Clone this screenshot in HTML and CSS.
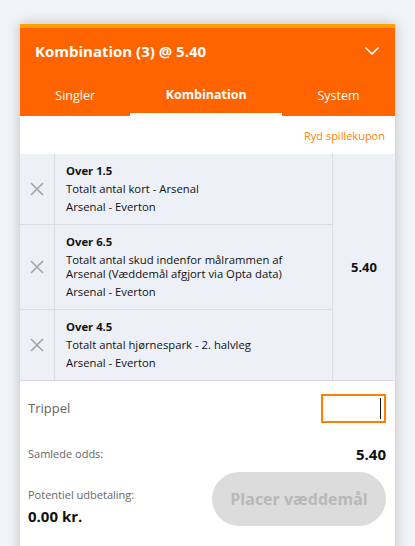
FILE: index.html
```html
<!DOCTYPE html>
<html lang="da">
<head>
<meta charset="utf-8">
<title>Spillekupon</title>
<link rel="stylesheet" href="styles.css">
</head>
<body>
<div class="slip">
  <div class="slip-header">
    <span class="slip-title">Kombination (3) @ 5.40</span>
    <svg class="chevron" width="14" height="8" viewBox="0 0 14 8"><path d="M1 1l6 6 6-6" fill="none" stroke="#fff" stroke-width="1.6" stroke-linecap="round" stroke-linejoin="round"/></svg>
  </div>
  <div class="tabs">
    <div class="tab">Singler</div>
    <div class="tab active">Kombination</div>
    <div class="tab">System</div>
  </div>
  <div class="clear-row"><span class="clear-link">Ryd spillekupon</span></div>
  <div class="legs">
    <div class="leg-list">
      <div class="leg">
        <div class="leg-remove"><svg width="14" height="14" viewBox="0 0 14 14"><path d="M1 1l12 12M13 1L1 13" stroke="#a3a3a3" stroke-width="1.6"/></svg></div>
        <div class="leg-info">
          <div class="leg-sel">Over 1.5</div>
          <div class="leg-market">Totalt antal kort - Arsenal</div>
          <div class="leg-event">Arsenal - Everton</div>
        </div>
      </div>
      <div class="leg">
        <div class="leg-remove"><svg width="14" height="14" viewBox="0 0 14 14"><path d="M1 1l12 12M13 1L1 13" stroke="#a3a3a3" stroke-width="1.6"/></svg></div>
        <div class="leg-info">
          <div class="leg-sel">Over 6.5</div>
          <div class="leg-market">Totalt antal skud indenfor målrammen af Arsenal (Væddemål afgjort via Opta data)</div>
          <div class="leg-event">Arsenal - Everton</div>
        </div>
      </div>
      <div class="leg">
        <div class="leg-remove"><svg width="14" height="14" viewBox="0 0 14 14"><path d="M1 1l12 12M13 1L1 13" stroke="#a3a3a3" stroke-width="1.6"/></svg></div>
        <div class="leg-info">
          <div class="leg-sel">Over 4.5</div>
          <div class="leg-market">Totalt antal hjørnespark - 2. halvleg</div>
          <div class="leg-event">Arsenal - Everton</div>
        </div>
      </div>
    </div>
    <div class="legs-odds">5.40</div>
  </div>
  <div class="stake-row">
    <span class="stake-label">Trippel</span>
    <div class="stake-input"><span class="caret"></span></div>
  </div>
  <div class="total-row">
    <span class="muted">Samlede odds:</span>
    <span class="total-odds">5.40</span>
  </div>
  <div class="payout-row">
    <div class="payout">
      <div class="muted">Potentiel udbetaling:</div>
      <div class="payout-value">0.00 kr.</div>
    </div>
    <div class="place-btn">Placer væddemål</div>
  </div>
</div>
</body>
</html>
```
FILE: styles.css
```css
html, body {
  margin: 0;
  padding: 0;
}
body {
  background: #f2f3f7;
  font-family: "Open Sans", "Noto Sans", sans-serif;
  color: #111;
  padding: 24px 20px 0 20px;
  height: 546px;
  box-sizing: border-box;
  overflow: hidden;
}
.slip {
  background: #fff;
  border-top: 4px solid #ffa000;
  box-shadow: 0 0 12px rgba(0, 0, 0, 0.22);
  min-height: 560px;
}
.slip-header {
  background: #ff6400;
  height: 44px;
  display: flex;
  align-items: center;
  justify-content: space-between;
  padding: 1px 15px 0 15px;
  box-sizing: border-box;
}
.slip-title {
  color: #fff;
  font-weight: 700;
  font-size: 15px;
}
.chevron {
  margin-right: 1px;
}
.tabs {
  background: #ff6400;
  display: flex;
  height: 44px;
}
.tab {
  flex: 1 1 auto;
  display: flex;
  align-items: center;
  justify-content: center;
  color: #fff;
  font-size: 12.5px;
  box-sizing: border-box;
  padding-top: 2px;
}
.tab.active {
  font-weight: 700;
  border-bottom: 3px solid #fff;
  padding-top: 3px;
}
.clear-row {
  height: 38px;
  display: flex;
  align-items: center;
  justify-content: flex-end;
  padding-right: 10px;
}
.clear-link {
  color: #ff7f00;
  font-size: 11px;
}
.legs {
  display: flex;
  background: #edf0f7;
  border-bottom: 1px solid #d9dce4;
}
.leg-list {
  flex: 1;
}
.leg {
  display: flex;
  border-bottom: 1px solid #d9dce4;
}
.leg:last-child {
  border-bottom: none;
}
.leg-remove {
  width: 35px;
  flex: none;
  border-right: 1px solid #d9dce4;
  display: flex;
  align-items: center;
  justify-content: center;
  box-sizing: border-box;
}
.leg-info {
  flex: 1;
  padding: 10px 10px 10px 11px;
  display: flex;
  flex-direction: column;
  gap: 4px;
  font-size: 11.3px;
  line-height: 14px;
}
.leg-sel {
  font-weight: 700;
}
.legs-odds {
  width: 63px;
  flex: none;
  border-left: 1px solid #d9dce4;
  display: flex;
  align-items: center;
  justify-content: center;
  font-weight: 700;
  font-size: 13px;
  box-sizing: border-box;
}
.stake-row {
  height: 54px;
  display: flex;
  align-items: center;
  justify-content: space-between;
  padding: 0 9px 0 8px;
}
.stake-label {
  color: #666;
  font-size: 13px;
}
.stake-input {
  width: 65px;
  height: 29px;
  border: 2px solid #ff8000;
  box-sizing: border-box;
  display: flex;
  justify-content: flex-end;
  align-items: center;
  padding-right: 3px;
}
.caret {
  width: 1px;
  height: 21px;
  background: #111;
}
.total-row {
  display: flex;
  justify-content: space-between;
  align-items: center;
  padding: 0 9px 0 8px;
  height: 37px;
}
.muted {
  color: #666;
  font-size: 11px;
  line-height: 15px;
}
.total-odds {
  font-weight: 700;
  font-size: 15px;
}
.payout-row {
  display: flex;
  justify-content: space-between;
  align-items: flex-start;
  padding: 0 9px 0 8px;
}
.payout {
  display: flex;
  flex-direction: column;
  gap: 4px;
  padding-top: 15px;
}
.payout-value {
  font-weight: 700;
  font-size: 15px;
  line-height: 20px;
}
.place-btn {
  width: 174px;
  height: 54px;
  border-radius: 27px;
  background: #dcdcdc;
  color: #b8b8b8;
  font-weight: 700;
  font-size: 16px;
  display: flex;
  align-items: center;
  justify-content: center;
}
```
